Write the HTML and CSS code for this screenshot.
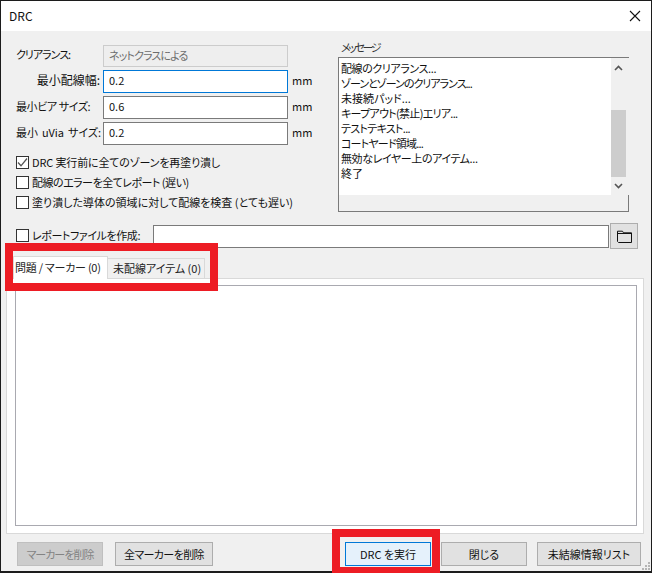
FILE: index.html
```html
<!DOCTYPE html>
<html lang="ja">
<head>
<meta charset="utf-8">
<title>DRC</title>
<link rel="stylesheet" href="styles.css">
</head>
<body>
<div class="window">
  <div class="titlebar">
    <span class="title">DRC</span>
    <svg class="close" width="12" height="12" viewBox="0 0 12 12"><path d="M1 1L11 11M11 1L1 11" stroke="#111" stroke-width="1.1" fill="none"/></svg>
  </div>
  <div class="content">
    <div class="top">
      <div class="settings">
        <div class="fields">
          <span class="lbl ls10">クリアランス:</span>
          <div class="field disabled ls9">ネットクラスによる</div>
          <span></span>
          <span class="lbl right kanji">最小配線幅:</span>
          <div class="field active">0.2</div>
          <span class="unit">mm</span>
          <span class="lbl ls4">最小ビア サイズ:</span>
          <div class="field">0.6</div>
          <span class="unit">mm</span>
          <span class="lbl wide-words">最小 uVia サイズ:</span>
          <div class="field">0.2</div>
          <span class="unit">mm</span>
        </div>
        <div class="checks">
          <label class="check ls1"><span class="box"><svg width="11" height="11" viewBox="0 0 11 11"><path d="M1 5.5L4 8.8L10 1.5" stroke="#555" stroke-width="1.3" fill="none"/></svg></span>DRC 実行前に全てのゾーンを再塗り潰し</label>
          <label class="check ls5"><span class="box"></span>配線のエラーを全てレポート (遅い)</label>
          <label class="check"><span class="box"></span>塗り潰した導体の領域に対して配線を検査 (とても遅い)</label>
        </div>
      </div>
      <div class="messages">
        <div class="msg-label">メッセージ</div>
        <div class="msg-box">
          <div class="msg-text">
            <div class="ls4">配線のクリアランス...</div>
            <div class="ls10">ゾーンとゾーンのクリアランス...</div>
            <div>未接続パッド...</div>
            <div class="ls7">キープアウト(禁止)エリア...</div>
            <div class="ls7">テストテキスト...</div>
            <div class="ls8">コートヤード領域...</div>
            <div class="ls4">無効なレイヤー上のアイテム...</div>
            <div>終了</div>
          </div>
          <div class="vbar">
            <svg class="arrow" width="9" height="6" viewBox="0 0 9 6"><path d="M1 5L4.5 1.5L8 5" stroke="#555" stroke-width="1.6" fill="none"/></svg>
            <div class="thumb"></div>
            <svg class="arrow down" width="9" height="6" viewBox="0 0 9 6"><path d="M1 1L4.5 4.5L8 1" stroke="#555" stroke-width="1.6" fill="none"/></svg>
          </div>
          <div class="hbar">
            <svg width="6" height="9" viewBox="0 0 6 9"><path d="M5 1L1.5 4.5L5 8" stroke="#c2c2c2" stroke-width="1.6" fill="none"/></svg>
            <svg width="6" height="9" viewBox="0 0 6 9"><path d="M1 1L4.5 4.5L1 8" stroke="#c2c2c2" stroke-width="1.6" fill="none"/></svg>
          </div>
          <div class="corner"></div>
        </div>
      </div>
    </div>
    <div class="report">
      <label class="check report-check ls4"><span class="box"></span>レポートファイルを作成:</label>
      <div class="field report-field"></div>
      <div class="folder-btn">
        <svg width="15" height="13" viewBox="0 0 15 13"><path d="M0.5 11.5V1.2H5.5L6.5 2.8H14.5V12.5H1.5Z" fill="none" stroke="#111" stroke-width="1"/><path d="M0.5 3.5H14.5" stroke="#111" stroke-width="1"/></svg>
      </div>
    </div>
    <div class="notebook">
      <div class="tabs">
        <div class="tab current ls2">問題 / マーカー (0)</div>
        <div class="tab">未配線アイテム (0)</div>
      </div>
      <div class="panel"><div class="list"></div></div>
    </div>
    <div class="buttons">
      <div class="btn disabled-btn w-clear ls10">マーカーを削除</div>
      <div class="btn w-all ls6">全マーカーを削除</div>
      <div class="btn default-btn w-run">DRC を実行</div>
      <div class="btn w-close">閉じる</div>
      <div class="btn w-list">未結線情報リスト</div>
    </div>
    <svg class="grip" width="9" height="9" viewBox="0 0 9 9"><path d="M6 0h2v2h-2zM3 3h2v2h-2zM6 3h2v2h-2zM0 6h2v2h-2zM3 6h2v2h-2zM6 6h2v2h-2z" fill="#b5b5b5"/></svg>
  </div>
</div>
<div class="mark mark-tabs"></div>
<div class="mark mark-run"></div>
</body>
</html>
```
FILE: styles.css
```css
html, body {
  margin: 0;
  padding: 0;
}
body {
  position: relative;
  width: 652px;
  height: 573px;
  overflow: hidden;
  background: #1c1c1c;
  font-family: "Noto Sans CJK JP", "Noto Sans", sans-serif;
  font-size: 11px;
  font-feature-settings: "palt";
  color: #111;
}
.ls1 { letter-spacing: -0.15px; }
.ls2 { letter-spacing: -0.25px; }
.ls4 { letter-spacing: -0.4px; }
.ls5 { letter-spacing: -0.5px; }
.ls6 { letter-spacing: -0.6px; }
.ls7 { letter-spacing: -0.7px; }
.ls8 { letter-spacing: -0.8px; }
.ls9 { letter-spacing: -0.9px; }
.ls10 { letter-spacing: -1px; }
.wide-words { word-spacing: 1.5px; }
.kanji { font-size: 12px; }
.window {
  display: flex;
  flex-direction: column;
  width: 650px;
  height: 570px;
  margin: 1px 0 0 1px;
}
.titlebar {
  display: flex;
  align-items: center;
  justify-content: space-between;
  flex: none;
  height: 30px;
  padding: 0 10px 0 8px;
  background: #fff;
}
.title { font-size: 12px; line-height: 16px; }
.close { display: block; }
.content {
  position: relative;
  flex: 1;
  background: #f0f0f0;
}
.top {
  display: flex;
  height: 181px;
  padding-left: 15px;
}
.settings {
  width: 322px;
  padding-top: 13px;
}
.fields {
  display: grid;
  grid-template-columns: 87px 185px 34px;
  grid-auto-rows: 23px;
  row-gap: 3px;
  align-items: center;
}
.lbl {
  padding-bottom: 3px;
  white-space: nowrap;
  line-height: 16px;
}
.lbl.right { padding-right: 3px; text-align: right; }
.unit { padding: 0 0 3px 4px; line-height: 16px; }
.field {
  box-sizing: border-box;
  height: 23px;
  padding-left: 5px;
  border: 1px solid #7a7a7a;
  background: #fff;
  line-height: 19px;
}
.field.active { border-color: #0078d7; }
.field.disabled {
  height: 22px;
  border-color: #ccc;
  background: #eeeeee;
  color: #6d6d6d;
  line-height: 18px;
}
.checks {
  margin-top: 7px;
}
.check {
  display: flex;
  align-items: center;
  height: 20px;
  white-space: nowrap;
}
.box {
  box-sizing: border-box;
  display: flex;
  align-items: center;
  justify-content: center;
  flex: none;
  width: 13px;
  height: 13px;
  margin-right: 3px;
  border: 1px solid #333;
  background: #fff;
}
.messages {
  width: 291px;
  padding-top: 9px;
}
.msg-label {
  height: 17px;
  margin-left: 3px;
  letter-spacing: -2.4px;
  line-height: 14px;
  color: #333;
}
.msg-box {
  box-sizing: border-box;
  display: grid;
  grid-template-columns: 1fr 15px 2px;
  grid-template-rows: 137px 16px;
  height: 155px;
  border: 1px solid #7a7a7a;
  background: #f0f0f0;
}
.msg-text {
  padding: 3px 0 0 2px;
  background: #fff;
  line-height: 15px;
}
.vbar {
  display: flex;
  flex-direction: column;
  align-items: center;
  background: #f0f0f0;
}
.arrow { display: block; margin-top: 7px; flex: none; }
.arrow.down { margin-top: 6px; }
.thumb {
  flex: none;
  width: 15px;
  height: 67px;
  margin-top: 39px;
  background: #cdcdcd;
}
.hbar {
  display: flex;
  align-items: center;
  justify-content: space-between;
  padding: 0 6px;
  background: #f0f0f0;
}
.corner { grid-column: 2 / 4; }
.report {
  display: flex;
  align-items: center;
  height: 26px;
  margin-top: 11px;
  padding-left: 15px;
}
.report-check { width: 137px; height: 24px; margin-bottom: 2px; }
.report-field { width: 456px; }
.folder-btn {
  box-sizing: border-box;
  display: flex;
  align-items: center;
  justify-content: center;
  width: 28px;
  height: 26px;
  margin-left: 1px;
  border: 1px solid #adadad;
  background: #e1e1e1;
}
.notebook { margin-top: 7px; }
.tabs {
  position: relative;
  display: flex;
  align-items: flex-end;
  height: 22px;
  margin-left: 12px;
}
.tab {
  box-sizing: border-box;
  width: 97px;
  height: 20px;
  padding-left: 5px;
  border: 1px solid #d9d9d9;
  border-bottom: 0;
  border-left: 0;
  background: #f0f0f0;
  color: #222;
  line-height: 19px;
  white-space: nowrap;
}
.tab.current {
  width: 95px;
  height: 23px;
  padding-left: 1px;
  margin-bottom: -1px;
  border-left: 1px solid #d9d9d9;
  background: #fff;
  line-height: 20px;
  z-index: 1;
}
.panel {
  box-sizing: border-box;
  width: 638px;
  height: 256px;
  margin-left: 5px;
  padding: 6px 6px 7px 8px;
  border: 1px solid #d9d9d9;
  background: #fff;
}
.list {
  box-sizing: border-box;
  height: 100%;
  border: 1px solid #a9a9b0;
  background: #fff;
}
.buttons {
  display: flex;
  margin-top: 8px;
  padding-left: 16px;
}
.btn {
  box-sizing: border-box;
  height: 24px;
  border: 1px solid #adadad;
  background: #e1e1e1;
  line-height: 22px;
  text-align: center;
  white-space: nowrap;
}
.disabled-btn {
  border-color: #bfbfbf;
  background: #cccccc;
  color: #838383;
}
.default-btn {
  border-color: #0078d7;
  background: #e5f1fb;
}
.w-clear { width: 86px; }
.w-all { width: 98px; margin-left: 12px; }
.w-run { width: 86px; margin-left: 132px; }
.w-close { width: 86px; margin-left: 10px; }
.w-list { width: 104px; margin-left: 10px; }
.grip {
  position: absolute;
  right: 0;
  bottom: 0;
}
.mark {
  position: absolute;
  box-sizing: border-box;
  border: 8px solid #ed1c24;
}
.mark-tabs {
  left: 5px;
  top: 243px;
  width: 213px;
  height: 48px;
}
.mark-run {
  left: 332px;
  top: 529px;
  width: 108px;
  height: 46px;
}
```
